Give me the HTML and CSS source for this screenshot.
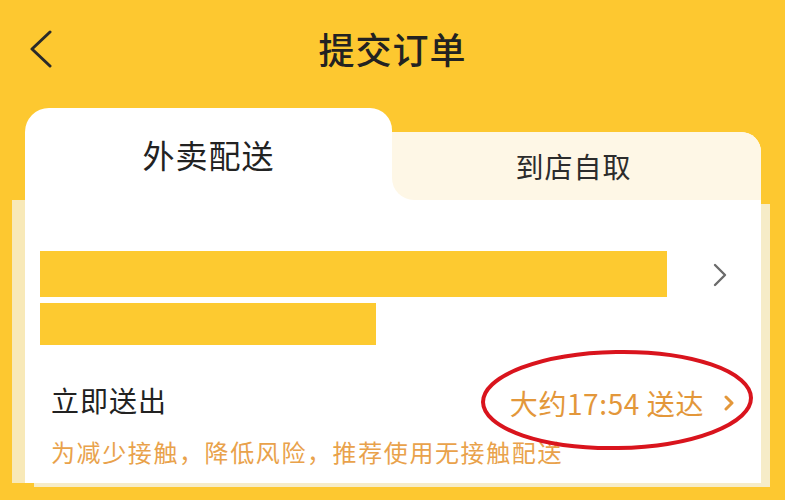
FILE: index.html
```html
<!DOCTYPE html>
<html lang="zh-CN">
<head>
<meta charset="utf-8">
<title>提交订单</title>
<link rel="stylesheet" href="styles.css">
</head>
<body>
<div class="page">
  <header class="header">
    <div class="back">
      <svg width="24" height="38" viewBox="0 0 24 38"><polyline points="21,2 3,19 21,36" fill="none" stroke="#2a2a2a" stroke-width="3" stroke-linecap="round" stroke-linejoin="round"/></svg>
    </div>
    <h1 class="title">提交订单</h1>
    <div></div>
  </header>

  <section class="card">
    <div class="tabs">
      <div class="tab tab-active">外卖配送</div>
      <div class="tab-wrap">
        <div class="tab tab-idle">到店自取</div>
      </div>
    </div>

    <div class="body">
      <div class="address">
        <div class="bars">
          <div class="bar bar-long"></div>
          <div class="bar bar-short"></div>
        </div>
        <svg class="arrow" width="14" height="24" viewBox="0 0 14 24"><polyline points="2,2 12,12 2,22" fill="none" stroke="#6b6b6b" stroke-width="2.4" stroke-linecap="round" stroke-linejoin="round"/></svg>
      </div>

      <div class="send-row">
        <span class="send-label">立即送出</span>
        <span class="send-time">大约17:54 送达
          <svg class="time-arrow" width="10" height="16" viewBox="0 0 10 16"><polyline points="2,2 8,8 2,14" fill="none" stroke="#e3973a" stroke-width="3" stroke-linecap="round" stroke-linejoin="round"/></svg>
        </span>
      </div>
      <p class="notice">为减少接触，降低风险，推荐使用无接触配送</p>

      <svg class="circle" width="280" height="106" viewBox="0 0 280 106"><ellipse cx="139" cy="51" rx="134" ry="48" fill="none" stroke="#d9141d" stroke-width="4" transform="rotate(-1 139 51)"/></svg>
    </div>
  </section>
</div>
</body>
</html>
```

FILE: styles.css
```css
* { box-sizing: border-box; }
html, body { margin: 0; padding: 0; }
body {
  width: 785px;
  height: 500px;
  overflow: hidden;
  background: #fdc830;
  font-family: "Noto Sans CJK SC", "Noto Sans", sans-serif;
  color: #222;
}
.page { width: 785px; height: 500px; }

.header {
  height: 96px;
  display: grid;
  grid-template-columns: 1fr auto 1fr;
  align-items: center;
}
.back { padding-left: 29px; padding-top: 2px; display: flex; align-items: center; }
.title {
  margin: 0;
  font-size: 36px;
  font-weight: 500;
  letter-spacing: 1px;
  line-height: 44px;
  color: #222;
}

.card {
  margin: 12px 25px 0 25px;
  width: 736px;
}
.tabs {
  display: flex;
  align-items: flex-end;
  height: 92px;
}
.tab {
  display: flex;
  align-items: center;
  justify-content: center;
}
.tab-active {
  width: 367px;
  height: 92px;
  background: #fff;
  border-radius: 24px 22px 0 0;
  font-size: 32px;
  letter-spacing: 1px;
  color: #222;
}
.tab-wrap {
  flex: 1;
  height: 68px;
  background: #fff;
  border-top-right-radius: 20px;
}
.tab-idle {
  height: 68px;
  background: #fef7e6;
  border-radius: 0 20px 0 22px;
  font-size: 28px;
  letter-spacing: 1px;
  color: #2c2c2c;
  padding-right: 6px;
}

.body {
  position: relative;
  background: #fff;
  padding: 51px 27px 16px 15px;
  box-shadow: -13px 0 0 #f8e9b8, 9px 4px 0 #f6ecc8;
}
.address {
  display: flex;
  align-items: flex-start;
}
.bars { width: 627px; }
.bar { background: #fdca30; }
.bar-long { width: 627px; height: 46px; }
.bar-short { width: 336px; height: 42px; margin-top: 6px; }
.arrow { margin-left: 46px; margin-top: 12px; }

.send-row {
  margin-top: 37px;
  padding-left: 11px;
  display: flex;
  justify-content: space-between;
  align-items: center;
  height: 36px;
}
.send-label {
  font-size: 28px;
  letter-spacing: 1px;
  line-height: 36px;
  color: #222;
}
.send-time {
  display: flex;
  align-items: center;
  font-size: 28px;
  line-height: 36px;
  letter-spacing: 0.6px;
  color: #e3973a;
  padding-top: 6px;
}
.time-arrow { margin-left: 20px; }

.notice {
  margin: 19px 0 0 0;
  padding-left: 11px;
  font-size: 24px;
  line-height: 30px;
  letter-spacing: 1.6px;
  color: #e9a24b;
}

.circle {
  position: absolute;
  left: 453px;
  top: 149px;
}
```
